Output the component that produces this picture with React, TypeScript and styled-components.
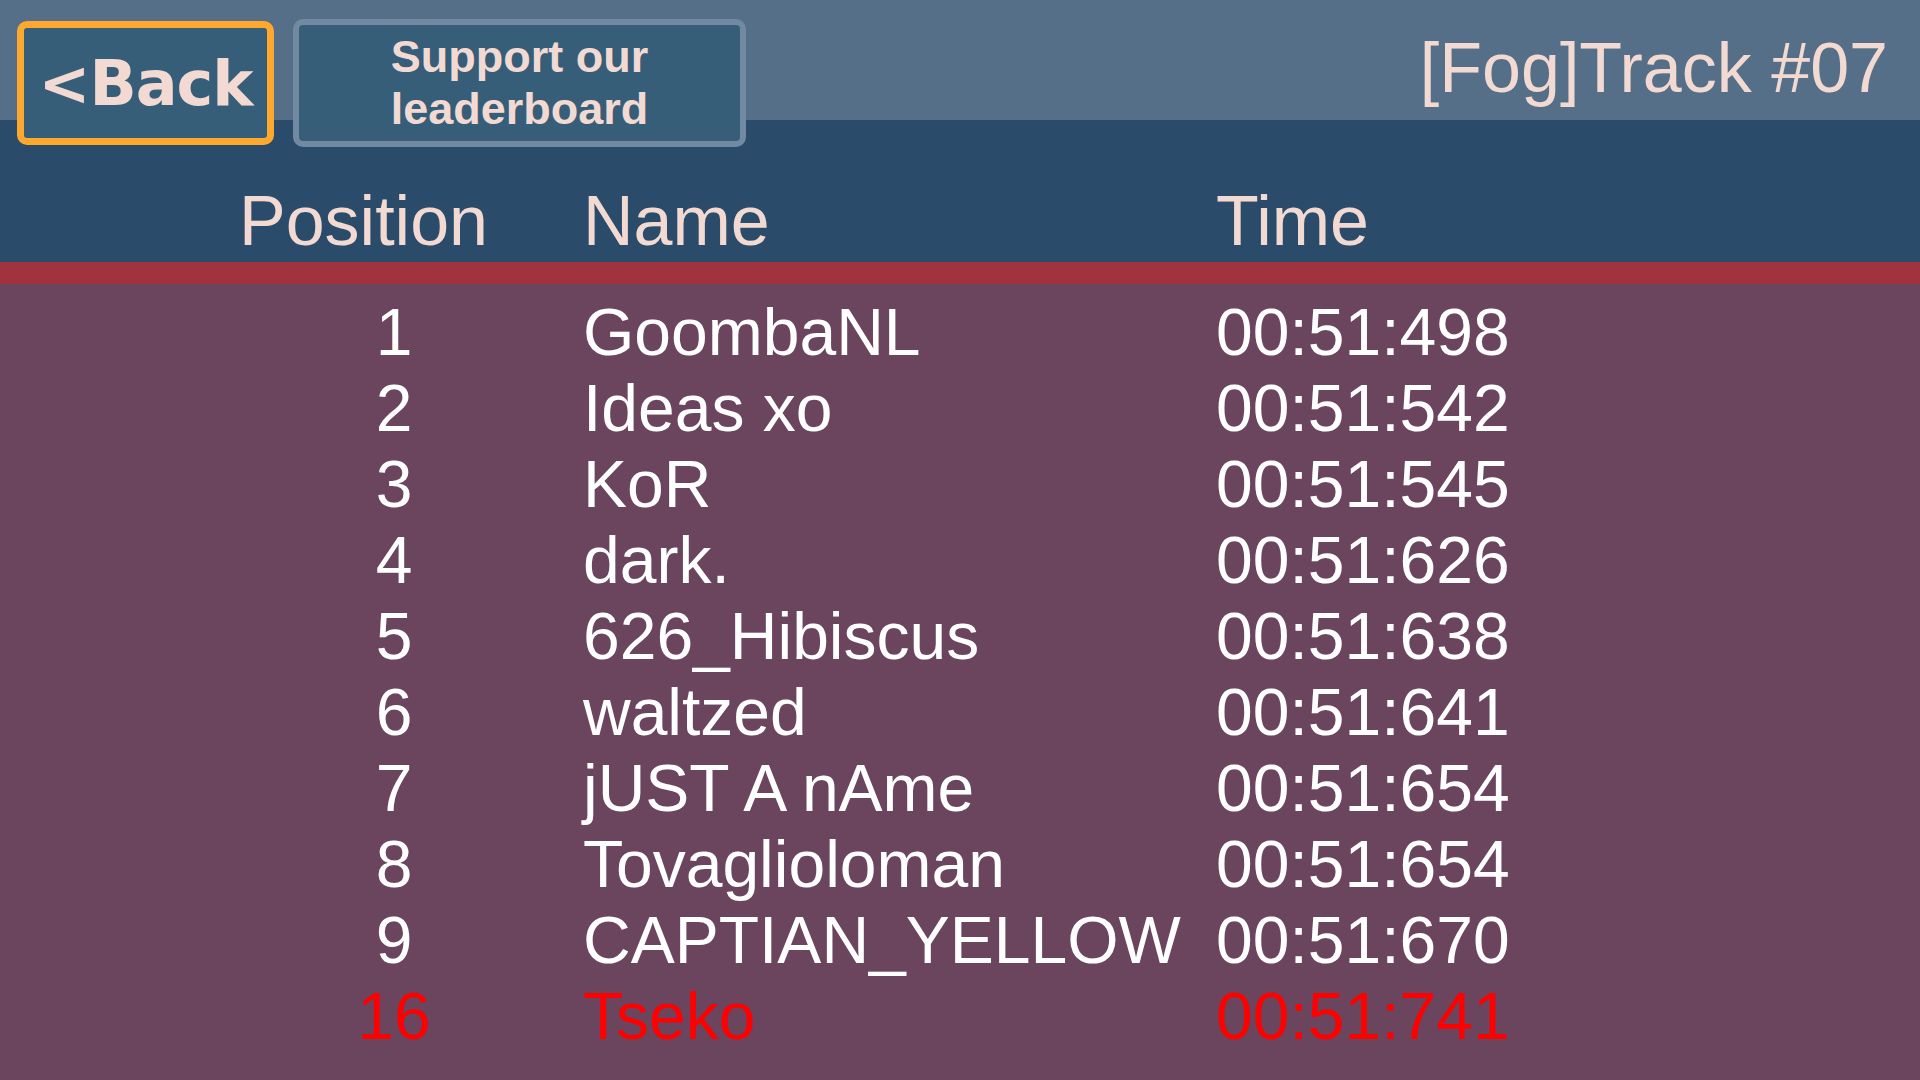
import styled, { createGlobalStyle } from "styled-components";

type Entry = {
  position: number;
  name: string;
  time: string;
  isPlayer?: boolean;
};

const entries: Entry[] = [
  { position: 1, name: "GoombaNL", time: "00:51:498" },
  { position: 2, name: "Ideas xo", time: "00:51:542" },
  { position: 3, name: "KoR", time: "00:51:545" },
  { position: 4, name: "dark.", time: "00:51:626" },
  { position: 5, name: "626_Hibiscus", time: "00:51:638" },
  { position: 6, name: "waltzed", time: "00:51:641" },
  { position: 7, name: "jUST A nAme", time: "00:51:654" },
  { position: 8, name: "Tovaglioloman", time: "00:51:654" },
  { position: 9, name: "CAPTIAN_YELLOW", time: "00:51:670" },
  { position: 16, name: "Tseko", time: "00:51:741", isPlayer: true },
];

const App = () => {
  return (
    <>
      <GlobalStyle />
      <Screen>
        <Header>
          <TopBar>
            <BackButton>&lt;Back</BackButton>
            <SupportButton>
              Support our
              <br />
              leaderboard
            </SupportButton>
            <TrackTitle>[Fog]Track #07</TrackTitle>
          </TopBar>
          <ColumnHeads>
            <HeadCell>Position</HeadCell>
            <HeadCell>Name</HeadCell>
            <HeadCell>Time</HeadCell>
          </ColumnHeads>
        </Header>
        <Divider />
        <Board>
          {entries.map((entry) => (
            <Row key={entry.position} $highlight={entry.isPlayer}>
              <PositionCell>{entry.position}</PositionCell>
              <span>{entry.name}</span>
              <span>{entry.time}</span>
            </Row>
          ))}
        </Board>
      </Screen>
    </>
  );
};

//  --- Styling ---
const GlobalStyle = createGlobalStyle`
  html, body {
    margin: 0;
    padding: 0;
    background-color: #6b445d;
  }

  body {
    font-family: "Liberation Sans", Arial, sans-serif;
  }
`;

const Screen = styled.main`
  width: 1920px;
  min-height: 1080px;
  overflow: hidden;
  background-color: #6b445d;
`;

const Header = styled.header`
  background: linear-gradient(to bottom, #546f87 0, #546f87 120px, #2a4b69 120px);
`;

const TopBar = styled.div`
  display: flex;
  align-items: center;
  gap: 19px;
  height: 128px;
  padding: 19px 32px 0 17px;
`;

const ButtonBase = styled.button`
  box-sizing: border-box;
  display: flex;
  align-items: center;
  justify-content: center;
  background-color: #375e79;
  color: #f2dad3;
  border-radius: 10px;
  padding: 0;
  cursor: pointer;
`;

const BackButton = styled(ButtonBase)`
  width: 257px;
  height: 124px;
  border: 7px solid #ffa82e;
  font-family: "DejaVu Sans", sans-serif;
  font-weight: bold;
  font-size: 62px;
  letter-spacing: -1px;
`;

const SupportButton = styled(ButtonBase)`
  width: 453px;
  height: 128px;
  border: 6px solid #7189a1;
  font-family: "Liberation Sans", Arial, sans-serif;
  font-weight: bold;
  font-size: 45px;
  line-height: 52px;
  text-align: center;
`;

const TrackTitle = styled.h1`
  margin: 9px 0 0 auto;
  align-self: flex-start;
  font-weight: normal;
  font-size: 70px;
  line-height: 80px;
  color: #f2dad3;
`;

const Columns = styled.div`
  display: grid;
  grid-template-columns: 310px 599px 1fr;
  column-gap: 34px;
  padding-left: 239px;
`;

const ColumnHeads = styled(Columns)`
  height: 115px;
  align-items: end;
  box-sizing: border-box;
  padding-bottom: 1px;
`;

const HeadCell = styled.span`
  font-size: 70px;
  line-height: 80px;
  color: #f2dad3;
`;

const Divider = styled.div`
  height: 22px;
  background-color: #a1333f;
`;

const Board = styled.section`
  padding-top: 10px;
`;

const Row = styled(Columns)<{ $highlight?: boolean }>`
  font-size: 66px;
  line-height: 76px;
  color: ${({ $highlight }) => ($highlight ? "#ff0000" : "#ffffff")};
  white-space: nowrap;
`;

const PositionCell = styled.span`
  text-align: center;
`;

export default App;
